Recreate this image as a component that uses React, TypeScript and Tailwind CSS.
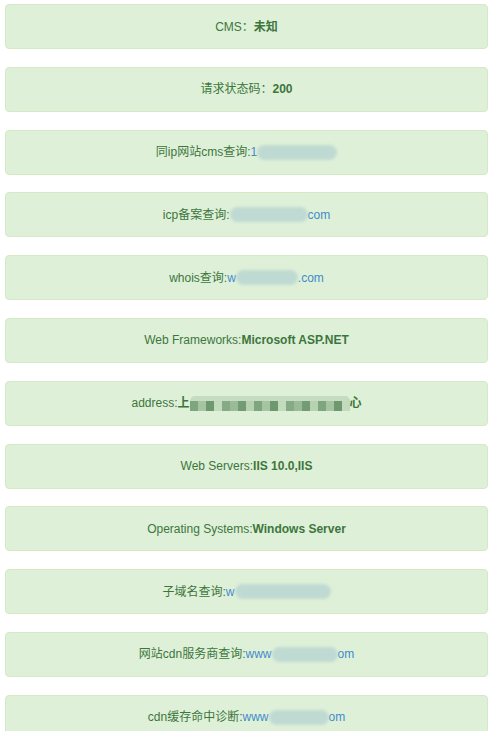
import React from "react";

type Part = { t: string; k?: "bold" | "link" | "blur" | "mosaic"; w?: number };

const rows: Part[][] = [
  [{ t: "CMS：" }, { t: "未知", k: "bold" }],
  [{ t: "请求状态码：" }, { t: "200", k: "bold" }],
  [{ t: "同ip网站cms查询:" }, { t: "1", k: "link" }, { t: "", k: "blur", w: 80 }],
  [{ t: "icp备案查询:" }, { t: "", k: "blur", w: 78 }, { t: "com", k: "link" }],
  [{ t: "whois查询:" }, { t: "w", k: "link" }, { t: "", k: "blur", w: 62 }, { t: ".com", k: "link" }],
  [{ t: "Web Frameworks:" }, { t: "Microsoft ASP.NET", k: "bold" }],
  [{ t: "address:" }, { t: "上", k: "bold" }, { t: "", k: "mosaic", w: 160 }, { t: "心", k: "bold" }],
  [{ t: "Web Servers:" }, { t: "IIS 10.0,IIS", k: "bold" }],
  [{ t: "Operating Systems:" }, { t: "Windows Server", k: "bold" }],
  [{ t: "子域名查询:" }, { t: "w", k: "link" }, { t: "", k: "blur", w: 96 }],
  [{ t: "网站cdn服务商查询:" }, { t: "www", k: "link" }, { t: "", k: "blur", w: 66 }, { t: "om", k: "link" }],
  [{ t: "cdn缓存命中诊断:" }, { t: "www", k: "link" }, { t: "", k: "blur", w: 60 }, { t: "om", k: "link" }],
];

const mosaicShades = ["#7fa57f", "#9bbb98", "#6f986f", "#b7d2b2", "#86aa85", "#a6c4a2", "#749c74", "#c3dbbd"];

function Piece({ p }: { p: Part }) {
  if (p.k === "bold") return <b className="font-bold">{p.t}</b>;
  if (p.k === "link") return <span className="text-[#428bca]">{p.t}</span>;
  if (p.k === "blur")
    return (
      <span
        className="inline-block h-[15px] align-middle rounded-full bg-[#bcd8d2] blur-[1.5px] opacity-90"
        style={{ width: p.w }}
      />
    );
  if (p.k === "mosaic") {
    const n = Math.floor((p.w ?? 100) / 8);
    return (
      <span className="inline-flex h-[15px] align-middle flex-col">
        <span className="flex h-[5px] rounded-t-full bg-[#c5dcc0]" style={{ width: p.w }} />
        <span className="flex h-[10px]">
          {Array.from({ length: n }).map((_, i) => (
            <span key={i} className="h-full w-[8px]" style={{ background: mosaicShades[(i * 5) % mosaicShades.length] }} />
          ))}
        </span>
      </span>
    );
  }
  return <span>{p.t}</span>;
}

export default function App() {
  return (
    <div
      className="min-h-[731px] bg-white pt-[4px] px-[5px] pr-[4px] text-[12px] text-[#3c763d]"
      style={{ fontFamily: '"Liberation Sans", Arial, "Noto Sans CJK SC", sans-serif' }}
    >
      <div className="flex flex-col gap-[17.8px]">
        {rows.map((r, i) => (
          <div
            key={i}
            className="flex h-[45px] items-center justify-center rounded-[4px] border border-[#d6e9c6] bg-[#dff0d8] leading-[14px] whitespace-nowrap"
          >
            {r.map((p, j) => (
              <Piece key={j} p={p} />
            ))}
          </div>
        ))}
      </div>
    </div>
  );
}
